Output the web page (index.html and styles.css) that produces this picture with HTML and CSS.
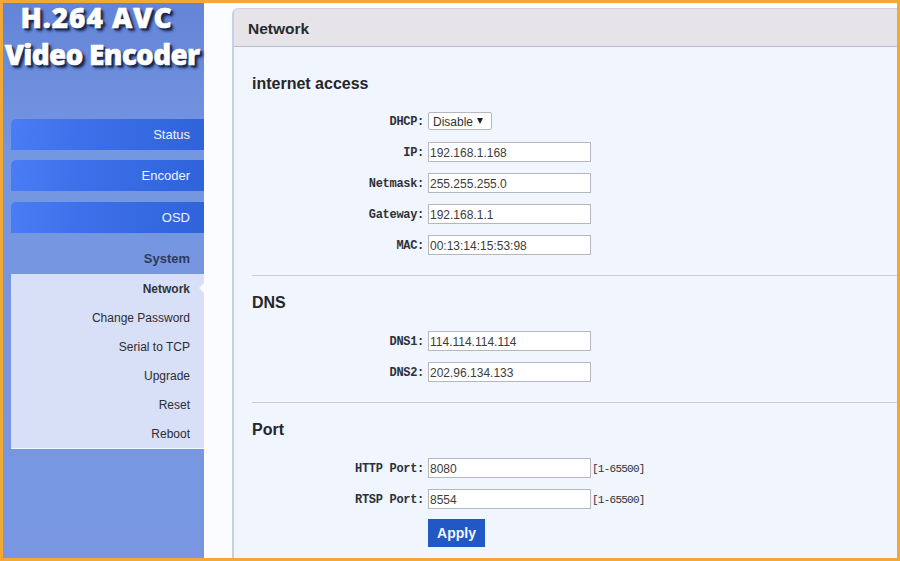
FILE: index.html
```html
<!DOCTYPE html>
<html lang="en">
<head>
<meta charset="utf-8">
<title>H.264 AVC Video Encoder</title>
<link rel="stylesheet" href="styles.css">
</head>
<body>
<div class="frame">
  <aside class="sidebar">
    <h1 class="logo"><span class="logo-a">H.264 AVC</span><span class="logo-b">Video Encoder</span></h1>
    <nav class="nav">
      <a class="nav-btn">Status</a>
      <a class="nav-btn">Encoder</a>
      <a class="nav-btn">OSD</a>
      <div class="nav-group">System</div>
      <ul class="submenu">
        <li class="active">Network</li>
        <li>Change Password</li>
        <li>Serial to TCP</li>
        <li>Upgrade</li>
        <li>Reset</li>
        <li>Reboot</li>
      </ul>
    </nav>
  </aside>
  <main class="main">
    <section class="panel">
      <header class="panel-head">Network</header>
      <div class="panel-body">
        <div class="section">
          <h2 class="section-title">internet access</h2>
          <div class="rows">
            <div class="row"><label class="lbl">DHCP:</label><div class="fake-select">Disable<span class="caret"></span></div></div>
            <div class="row"><label class="lbl">IP:</label><input class="field" value="192.168.1.168"></div>
            <div class="row"><label class="lbl">Netmask:</label><input class="field" value="255.255.255.0"></div>
            <div class="row"><label class="lbl">Gateway:</label><input class="field" value="192.168.1.1"></div>
            <div class="row"><label class="lbl">MAC:</label><input class="field" value="00:13:14:15:53:98"></div>
          </div>
        </div>
        <div class="section">
          <h2 class="section-title">DNS</h2>
          <div class="rows">
            <div class="row"><label class="lbl">DNS1:</label><input class="field" value="114.114.114.114"></div>
            <div class="row"><label class="lbl">DNS2:</label><input class="field" value="202.96.134.133"></div>
          </div>
        </div>
        <div class="section last">
          <h2 class="section-title">Port</h2>
          <div class="rows">
            <div class="row"><label class="lbl">HTTP Port:</label><input class="field" value="8080"><span class="hint">[1-65500]</span></div>
            <div class="row"><label class="lbl">RTSP Port:</label><input class="field" value="8554"><span class="hint">[1-65500]</span></div>
            <div class="row apply-row"><button class="apply">Apply</button></div>
          </div>
        </div>
      </div>
    </section>
  </main>
</div>
</body>
</html>
```
FILE: styles.css
```css
* { box-sizing: border-box; }
html, body { margin: 0; height: 100%; }
body { font-family: "Liberation Sans", Arial, sans-serif; color: #222; overflow: hidden; }
.frame {
  width: 900px; height: 561px;
  border: 3px solid #f0a937;
  display: flex;
  background: #fbfcff;
  overflow: hidden;
}
.sidebar {
  width: 201px; flex: none;
  background: linear-gradient(180deg, #6484d8 0, #7596e0 150px, #7897e0 100%);
}
.logo {
  margin: 0; height: 116px;
  color: #fff;
  font-family: "Open Sans", sans-serif;
  font-weight: 800;
  font-size: 28px;
  line-height: 28px;
  text-align: center;
  -webkit-text-stroke: 0.5px #fff;
  text-shadow: 2px 2px 1px #1a2a55, 3px 3px 3px #1a2a55;
  white-space: nowrap;
}
.logo-a { display: block; margin-bottom: 9px; padding-right: 14px; letter-spacing: 0.9px; }
.logo-b { display: block; padding-right: 3px; letter-spacing: -0.75px; }
.nav { margin-left: 8px; }
.nav-btn {
  display: block; height: 31px;
  margin-bottom: 10px;
  line-height: 32px;
  padding-right: 14px;
  text-align: right;
  color: #eef3ff;
  font-size: 13px;
  border-radius: 5px 0 0 0;
  background: linear-gradient(100deg, #4a7df5 0, #3d70ea 35%, #2f63da 100%);
}
.nav-btn:nth-child(3) { margin-top: 11px; margin-bottom: 0; line-height: 31px; }
.nav-group {
  height: 41px;
  line-height: 51px;
  text-align: right;
  padding-right: 14px;
  font-weight: bold;
  font-size: 13px;
  color: #2e3a5c;
}
.submenu {
  list-style: none; margin: 0; padding: 0;
  height: 175px;
  background: #d8e0f8;
  border-bottom: 1px solid #f4f6fe;
}
.submenu li {
  position: relative;
  height: 29px; line-height: 30px;
  text-align: right;
  padding-right: 14px;
  font-size: 12px;
  color: #2c2c34;
}
.submenu .active { font-weight: bold; color: #33333c; }
.submenu .active::after {
  content: ""; position: absolute;
  right: 0; top: 9px;
  border: 5px solid transparent;
  border-right-color: #fbfcff;
  border-left-width: 0;
}
.main { flex: 1; min-width: 0; padding: 5px 0 0 28px; }
.panel {
  height: 100%;
  background: #f0f5fe;
  border-left: 2px solid #c6d0e8;
  border-radius: 6px 0 0 0;
}
.panel-head {
  height: 39px;
  line-height: 39px;
  padding-left: 14px;
  background: #e6e4e8;
  border-top: 1px solid #cfd2da;
  border-bottom: 1px solid #b5bdd4;
  border-radius: 5px 0 0 0;
  font-weight: bold;
  font-size: 15.5px;
  color: #2a2a2e;
}
.section { padding: 18px 0 0 18px; background: linear-gradient(#c9ced9, #c9ced9) 18px 0 / 100% 1px no-repeat; }
.section:first-child { padding-top: 27px; background: none; }
.section-title {
  margin: 0;
  font-size: 16px;
  font-weight: bold;
  height: 20px; line-height: 20px;
  color: #26262a;
}
.rows { display: flex; flex-direction: column; gap: 11px; padding: 18px 0 20px; }
.section:first-child .rows { padding-top: 17px; }
.section.last .rows { padding-bottom: 0; }
.row { display: flex; align-items: center; height: 20px; }
.lbl {
  width: 176px; flex: none;
  text-align: right;
  padding: 2px 4px 0 0;
  font-family: "Liberation Mono", monospace;
  font-weight: bold;
  font-size: 12px;
  letter-spacing: -0.3px;
  color: #2d3038;
}
.field {
  width: 163px; height: 20px;
  padding: 1px 1px 0;
  border: 1px solid #b4b8be;
  background: #fff;
  font: 12px "Liberation Sans", Arial, sans-serif;
  color: #3c3c3c;
  border-radius: 0;
  outline: 0;
}
.fake-select {
  width: 64px; height: 18px;
  padding: 1px 0 0 4px;
  display: flex; align-items: center; gap: 4px;
  border: 1px solid #b4b8be;
  border-radius: 2px;
  background: #fff;
  font-size: 12px;
  color: #333;
}
.caret {
  border: 3px solid transparent;
  border-top: 6px solid #222;
  border-bottom: 0;
  margin-top: -2px;
}
.hint {
  margin-left: 1px;
  padding-top: 1px;
  font-family: "Liberation Mono", monospace;
  font-size: 11px;
  letter-spacing: -0.75px;
  color: #333;
}
.apply-row { height: 28px; padding-left: 176px; margin-top: -1px; }
.apply {
  width: 57px; height: 28px;
  border: 0; padding: 0;
  background: #2258c6;
  color: #f4f7ff;
  font: bold 14px "Liberation Sans", Arial, sans-serif;
}
```
